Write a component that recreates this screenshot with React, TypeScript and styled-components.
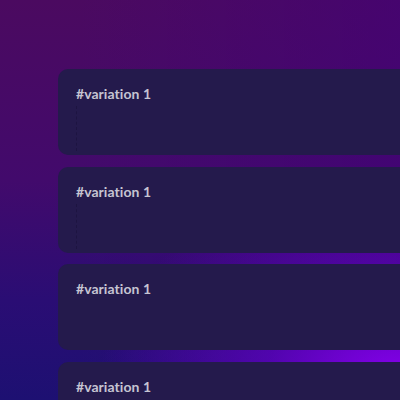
import React from "react";
import styled, { createGlobalStyle } from "styled-components";

const Global = createGlobalStyle`
  html, body { margin: 0; padding: 0; width: 400px; height: 400px; overflow: hidden; }
  body {
    background:
      radial-gradient(ellipse 75% 50% at 100% 95%, rgba(140, 0, 245, 0.95) 0%, rgba(110, 0, 220, 0.55) 45%, rgba(80, 0, 180, 0) 100%),
      linear-gradient(to right, rgba(66, 0, 122, 0) 20%, rgba(66, 0, 122, 0.55) 100%),
      linear-gradient(to bottom, #4b0a60 0%, #420a6c 45%, #2a0d74 75%, #1d1072 100%);
  }
`;

const Page = styled.main`
  display: flex;
  flex-direction: column;
  gap: 11.6px;
  padding: 69px 0 0 58px;
  width: 560px;
  font-family: "Lato", "Noto Sans", sans-serif;
`;

const Card = styled.section`
  height: 86px;
  border-radius: 10px;
  background: #241a4c;
  padding: 16px 18px 0;
  box-sizing: border-box;
  display: flex;
  flex-direction: column;
`;

const Title = styled.h2`
  margin: 0;
  font-size: 14px;
  font-weight: 700;
  line-height: 18px;
  color: #c6c4d2;
  letter-spacing: 0.05px;
`;

const Body = styled.div<{ $marked: boolean }>`
  flex: 1;
  margin: 3px 0 4px 0;
  border-left: 1px dashed ${(p) => (p.$marked ? "rgba(20, 12, 50, 0.4)" : "transparent")};
`;

const items = [true, true, false, false];

export default function App() {
  return (
    <>
      <Global />
      <Page>
        {items.map((m, i) => (
          <Card key={i}>
            <Title>#variation 1</Title>
            <Body $marked={m} />
          </Card>
        ))}
      </Page>
    </>
  );
}
